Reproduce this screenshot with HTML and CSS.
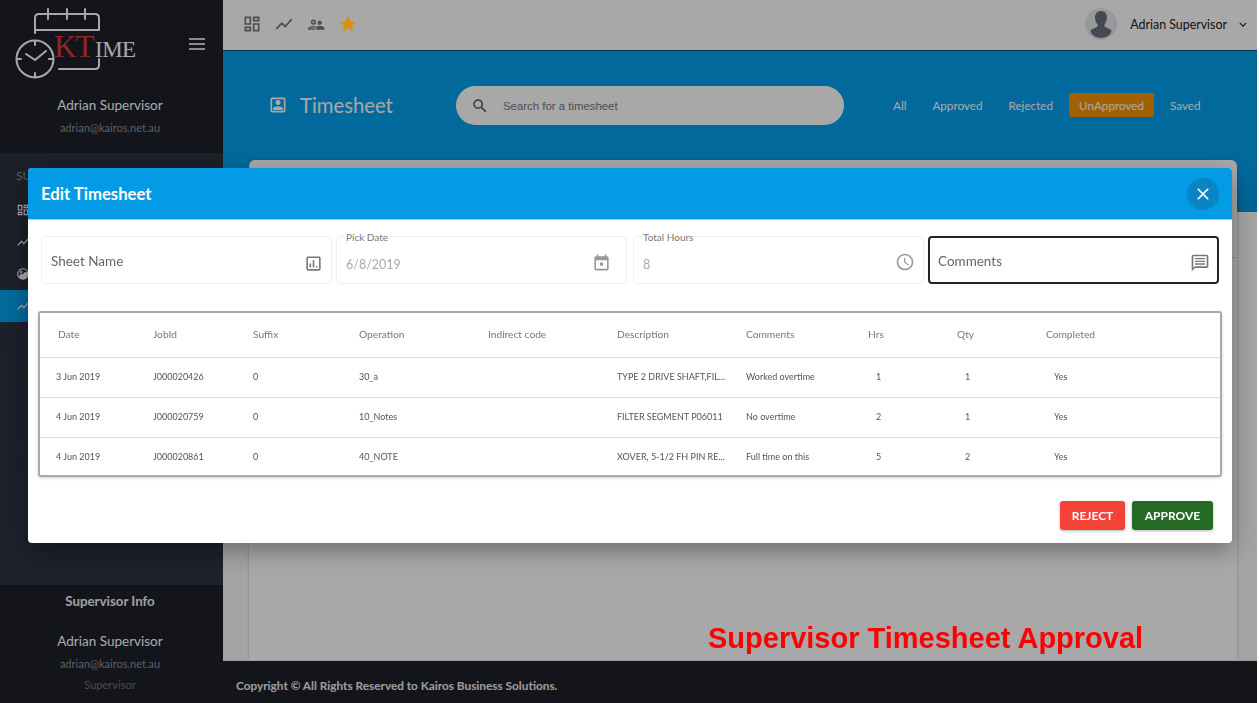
FILE: index.html
```html
<!DOCTYPE html>
<html lang="en">
<head>
<meta charset="utf-8">
<title>Timesheet</title>
<link rel="stylesheet" href="styles.css">
</head>
<body>
<div class="app">
  <aside class="sidebar">
    <div class="side-top">
      <div class="brand">
        <svg class="logo" viewBox="0 0 140 80" width="140" height="80">
          <g fill="none" stroke="#fff" stroke-width="2" stroke-linecap="round" stroke-linejoin="round">
            <path d="M35 33V18q0-4 4-4h56q4 0 4 4v12M35 30h64"/>
            <path d="M48 9v10M67 9v10M85 9v10"/>
            <path d="M59 69h36q4 0 4-4v-6"/>
            <circle cx="35" cy="59" r="18.5"/>
            <path d="M35 41v4M35 73v4M17 59h4M49 59h4M26 54l9 6 11-9"/>
          </g>
          <text class="logo-kt" x="54" y="57">KT</text>
          <text class="logo-ime" x="95" y="57">IME</text>
        </svg>
        <svg class="menu" viewBox="0 0 16 12" width="16" height="12"><path d="M0 0h16v2H0zM0 5h16v2H0zM0 10h16v2H0z" fill="#fff"/></svg>
      </div>
      <div class="who">Adrian Supervisor</div>
      <div class="mail">adrian@kairos.net.au</div>
    </div>
    <nav class="side-nav">
      <div class="nav-label">SUPERVISOR</div>
      <a class="nav-item"><svg viewBox="0 0 24 24" width="14" height="14"><path d="M19 5v2h-4V5h4M9 5v6H5V5h4m10 8v6h-4v-6h4M9 17v2H5v-2h4M21 3h-8v6h8V3zM11 3H3v10h8V3zm10 8h-8v10h8V11zm-10 4H3v6h8v-6z"/></svg>Dashboard</a>
      <a class="nav-item"><svg viewBox="0 0 24 24" width="14" height="14"><path d="M3.5 18.49l6-6.01 4 4L22 6.92l-1.41-1.41-7.09 7.97-4-4L2 16.99z"/></svg>Reports</a>
      <a class="nav-item"><svg viewBox="0 0 24 24" width="14" height="14"><path d="M12 2a10 10 0 1 0 0 20 10 10 0 0 0 0-20zm0 2a8 8 0 0 1 7.4 5H15a2 2 0 0 0-2 2v1H9a3 3 0 0 0-3 3v2.3A8 8 0 0 1 12 4zM9 6.5a2 2 0 1 0 0 4 2 2 0 0 0 0-4zm6 8a2 2 0 1 0 0 4 2 2 0 0 0 0-4z"/></svg>Employees</a>
      <a class="nav-item active"><svg viewBox="0 0 24 24" width="14" height="14"><path d="M3.5 18.49l6-6.01 4 4L22 6.92l-1.41-1.41-7.09 7.97-4-4L2 16.99z"/></svg>Timesheet</a>
    </nav>
    <div class="side-bottom">
      <div class="info-title">Supervisor Info</div>
      <div class="who">Adrian Supervisor</div>
      <div class="mail">adrian@kairos.net.au</div>
      <div class="role">Supervisor</div>
    </div>
  </aside>

  <main class="main">
    <header class="topbar">
      <div class="top-icons">
        <svg viewBox="0 0 24 24" width="20" height="20"><path d="M19 5v2h-4V5h4M9 5v6H5V5h4m10 8v6h-4v-6h4M9 17v2H5v-2h4M21 3h-8v6h8V3zM11 3H3v10h8V3zm10 8h-8v10h8V11zm-10 4H3v6h8v-6z"/></svg>
        <svg viewBox="0 0 24 24" width="20" height="20"><path d="M3.5 18.49l6-6.01 4 4L22 6.92l-1.41-1.41-7.09 7.97-4-4L2 16.99z"/></svg>
        <svg viewBox="0 0 24 24" width="20" height="20"><path d="M9 6.5a3.2 3.2 0 1 0 0 6.4 3.2 3.2 0 0 0 0-6.4zm0 1.9a1.3 1.3 0 1 1 0 2.6 1.3 1.3 0 0 1 0-2.6zM9 14.4c-3 0-6.500 1.300-6.500 3.300v1.300h8.600v-1.700H4.700c.6-.5 2.600-1.100 4.300-1.100 .9 0 1.800.1 2.500.3l1-1.500c-1.200-.4-2.500-.6-3.500-.6zM16.500 8a2.600 2.600 0 1 0 0 5.200 2.600 2.600 0 0 0 0-5.200zM16.500 14.500c-1 0-2 .2-2.900.5-.9.400-1.400 1-1.400 2v2h9.800v-2c0-2-3.700-2.500-5.500-2.500z"/></svg>
        <svg class="star" viewBox="0 0 24 24" width="20" height="20"><path d="M12 17.270L18.180 21l-1.640-7.030L22 9.240l-7.190-.61L12 2 9.190 8.630 2 9.240l5.460 4.730L5.820 21z"/></svg>
      </div>
      <div class="user">
        <svg class="avatar" viewBox="0 0 32 32" width="32" height="32"><circle cx="16" cy="16" r="16" fill="#e6e8ec"/><path d="M16 3c-3.800 0-6 2.800-6 6.500 0 2.800 1 5.200 2.600 6.800v2c-.8 1.200-6.100 2.500-7.100 4.500C6 26.500 10 30 16 30s10-3.500 10.500-7.200c-1-2-6.300-3.300-7.100-4.500v-2C21 14.700 22 12.300 22 9.500 22 5.800 19.800 3 16 3z" fill="#6a717d"/></svg>
        <span class="user-name">Adrian Supervisor</span>
        <svg class="chev" viewBox="0 0 10 6" width="8" height="5"><path d="M1 1l4 4 4-4" fill="none" stroke="#222" stroke-width="1.400"/></svg>
      </div>
    </header>
    <section class="hero">
      <div class="hero-title">
        <svg viewBox="0 0 24 24" width="20" height="20"><path d="M19 3H5c-1.100 0-2 .9-2 2v14c0 1.100.9 2 2 2h14c1.100 0 2-.9 2-2V5c0-1.100-.9-2-2-2zm0 16H5V5h14v14zM12 12a3 3 0 1 0 0-6 3 3 0 0 0 0 6zm-6 6h12v-1.500c0-2-4-3.100-6-3.100s-6 1.100-6 3.100z"/></svg>
        <h1>Timesheet</h1>
      </div>
      <div class="search">
        <svg viewBox="0 0 24 24" width="18" height="18"><path d="M15.500 14h-.79l-.28-.27A6.470 6.470 0 0 0 16 9.500 6.500 6.500 0 1 0 9.500 16c1.610 0 3.090-.59 4.230-1.570l.27.28v.79l5 4.990L20.490 19l-4.990-5zm-6 0C7.010 14 5 11.990 5 9.500S7.010 5 9.500 5 14 7.010 14 9.500 11.990 14 9.500 14z"/></svg>
        <span>Search for a timesheet</span>
      </div>
      <div class="filters">
        <a>All</a><a>Approved</a><a>Rejected</a><a class="on">UnApproved</a><a>Saved</a>
      </div>
    </section>
    <section class="content">
      <div class="card"><div class="card-head"></div></div>
    </section>
    <footer class="footer">Copyright © All Rights Reserved to Kairos Business Solutions.</footer>
  </main>
</div>

<div class="overlay">
  <div class="modal">
    <div class="modal-head">
      <h2>Edit Timesheet</h2>
      <button class="close"><svg viewBox="0 0 24 24" width="20" height="20"><path d="M19 6.410L17.590 5 12 10.590 6.410 5 5 6.410 10.590 12 5 17.590 6.410 19 12 13.410 17.590 19 19 17.590 13.410 12z"/></svg></button>
    </div>
    <div class="fields">
      <div class="field"><span class="ph">Sheet Name</span>
        <svg viewBox="0 0 24 24" width="19" height="19"><path d="M9 17H7v-5h2v5zm4 0h-2V8h2v9zm4 0h-2v-2h2v2zm2 2H5V5h14v14zm0-16H5c-1.100 0-2 .9-2 2v14c0 1.100.9 2 2 2h14c1.100 0 2-.9 2-2V5c0-1.100-.9-2-2-2z"/></svg></div>
      <div class="field filled date"><span class="legend">Pick Date</span><span class="val">6/8/2019</span>
        <svg viewBox="0 0 24 24" width="19" height="19"><path d="M19 4h-1V2h-2v2H8V2H6v2H5c-1.110 0-1.990.9-1.990 2L3 20c0 1.100.89 2 2 2h14c1.100 0 2-.9 2-2V6c0-1.100-.9-2-2-2zm0 16H5V9h14v11zM10 12h4v4h-4z"/></svg></div>
      <div class="field filled hours"><span class="legend">Total Hours</span><span class="val">8</span>
        <svg viewBox="0 0 24 24" width="20" height="20"><path d="M11.990 2C6.470 2 2 6.480 2 12s4.470 10 9.990 10C17.520 22 22 17.520 22 12S17.520 2 11.990 2zM12 20c-4.420 0-8-3.580-8-8s3.580-8 8-8 8 3.580 8 8-3.580 8-8 8zm.5-13H11v6l5.250 3.150.75-1.230-4.500-2.670z"/></svg></div>
      <div class="field focus"><span class="ph">Comments</span>
        <svg viewBox="0 0 24 24" width="20" height="20"><path d="M20 2H4c-1.100 0-2 .9-2 2v18l4-4h14c1.100 0 2-.9 2-2V4c0-1.100-.9-2-2-2zm0 14H6l-2 2V4h16v12zM6 6h12v1.600H6zM6 9.200h12v1.600H6zM6 12.400h12V14H6z"/></svg></div>
    </div>
    <div class="table-box">
      <table class="grid">
        <thead>
          <tr><th class="c1">Date</th><th class="c2">JobId</th><th class="c3">Suffix</th><th class="c4">Operation</th><th class="c5">Indirect code</th><th class="c6">Description</th><th class="c7">Comments</th><th class="c8">Hrs</th><th class="c9">Qty</th><th>Completed</th></tr>
        </thead>
        <tbody>
          <tr><td class="d">3 Jun 2019</td><td>J000020426</td><td>0</td><td>30_a</td><td></td><td>TYPE 2 DRIVE SHAFT,FIL...</td><td>Worked overtime</td><td class="n">1</td><td class="n">1</td><td class="y">Yes</td></tr>
          <tr><td class="d">4 Jun 2019</td><td>J000020759</td><td>0</td><td>10_Notes</td><td></td><td>FILTER SEGMENT P06011</td><td>No overtime</td><td class="n">2</td><td class="n">1</td><td class="y">Yes</td></tr>
          <tr><td class="d">4 Jun 2019</td><td>J000020861</td><td>0</td><td>40_NOTE</td><td></td><td>XOVER, 5-1/2 FH PIN RE...</td><td>Full time on this</td><td class="n">5</td><td class="n">2</td><td class="y">Yes</td></tr>
        </tbody>
      </table>
    </div>
    <div class="actions">
      <button class="btn reject">REJECT</button>
      <button class="btn approve">APPROVE</button>
    </div>
  </div>
</div>
<div class="caption">Supervisor Timesheet Approval</div>
</body>
</html>
```

FILE: styles.css
```css
* { box-sizing: border-box; }
html, body { margin: 0; height: 100%; overflow: hidden; }
body { font-family: "Lato", "Noto Sans", sans-serif; color: #222; background: #fff; }
h1, h2 { margin: 0; font-weight: 400; }

.app { display: grid; grid-template-columns: 223px 1fr; width: 1257px; height: 703px; }

/* sidebar */
.sidebar { display: flex; flex-direction: column; background: #1e212a; color: #fff; text-align: center; }
.side-top { height: 153px; }
.side-top .who, .side-top .mail, .side-bottom { padding-right: 3px; }
.brand { display: flex; align-items: flex-start; height: 90px; }
.logo { display: block; flex: none; }
.logo-kt { font: 400 31px "Liberation Serif", serif; fill: #d63a3a; letter-spacing: -1px; }
.logo-ime { font: 400 23px "Liberation Serif", serif; fill: #fff; letter-spacing: -.5px; }
.menu { margin: 38px 0 0 49px; opacity: .8; }
.who { font-size: 13.500px; line-height: 20px; margin-top: 5px; }
.mail { font-size: 11px; line-height: 16px; margin-top: 5px; color: #8d909a; }
.side-nav { flex: 1; background: linear-gradient(#2b303f, #2d3343); text-align: left; padding-top: 15px; }
.nav-label { font-size: 12px; color: #8d909a; padding-left: 16px; height: 26px; line-height: 16px; }
.nav-item { display: flex; align-items: center; gap: 10px; height: 32px; padding-left: 16px; font-size: 13px; color: #fff; }
.nav-item svg { fill: #fff; flex: none; }
.nav-item.active { background: #03a0ec; }
.side-bottom { height: 118px; padding-top: 6px; }
.info-title { font-size: 13.300px; font-weight: 700; line-height: 20px; color: #f2f2f2; margin-bottom: 20px; }
.side-bottom .who { margin-top: 0; }
.role { font-size: 11px; line-height: 16px; margin-top: 5px; color: #70737c; }

/* main */
.main { display: flex; flex-direction: column; min-width: 0; background: #f8f8f8; }
.topbar { height: 51px; flex: none; display: flex; align-items: center; justify-content: space-between; padding: 0 10px 2px 19px; background: #fff; border-bottom: 1px solid #02567f; }
.top-icons { display: flex; gap: 12px; align-items: center; }
.top-icons svg { fill: #777; }
.top-icons .star { fill: #d6920f; position: relative; z-index: 11; }
.user { display: flex; align-items: center; }
.avatar { margin-right: 13px; }
.user-name { font-size: 12.400px; color: #222; }
.chev { margin-left: 12px; }

.hero { height: 161px; flex: none; display: flex; align-items: flex-start; padding: 35px 0 0 45px; background: linear-gradient(#03a0ec 70%, #0395dc); color: #fff; }
.hero-title { display: flex; align-items: center; gap: 12px; width: 188px; height: 38px; }
.hero-title svg { fill: #fff; flex: none; }
.hero-title h1 { font-size: 20.300px; }
.search { display: flex; align-items: center; gap: 14px; width: 388px; height: 39px; padding-left: 15px; border-radius: 20px; background: #fff; color: #777; font: 11.400px "Liberation Sans", sans-serif; }
.search svg { fill: #555; }
.filters { display: flex; align-items: center; height: 37px; margin-left: 39px; font-size: 11.700px; gap: 6px; }
.filters a { padding: 5px 10px; color: #fff; }
.filters .on { background: #f59300; border-radius: 2px; }

.content { flex: 1; padding: 0 20px 0 26px; margin-top: -52px; min-height: 0; }
.card { height: 100%; background: #fff; border-radius: 6px 6px 0 0; box-shadow: 0 0 3px rgba(0,0,0,.2); }
.card-head { height: 98px; border-bottom: 1px solid #ddd; }
.footer { height: 43px; flex: none; display: flex; align-items: center; padding: 7px 0 0 13px; background: #1e212a; color: #eee; font-size: 11.800px; font-weight: 700; border-top: 1px solid #eee; }

/* overlay + modal */
.overlay { position: fixed; inset: 0 2px 0 0; z-index: 10; background: rgba(0,0,0,.34); padding: 168px 25px 0 28px; }
.modal { height: 375px; background: #fff; border-radius: 4px; overflow: hidden; box-shadow: 0 8px 24px rgba(0,0,0,.35); }
.modal-head { height: 52px; display: flex; align-items: center; justify-content: space-between; padding: 0 13px; background: #039be5; border-bottom: 1px solid #7fdcff; color: #fff; }
.modal-head h2 { font-size: 16.700px; font-weight: 700; }
.close { width: 32px; height: 32px; padding: 6px; border: 0; border-radius: 50%; background: #0a84c2; display: flex; }
.close svg { fill: #fff; }

.fields { display: grid; grid-template-columns: 295px 297px 295px 291px; padding: 16px 0 0 13px; }
.field { position: relative; width: 291px; height: 48px; display: flex; align-items: center; justify-content: space-between; padding: 0 8px 0 9px; border: 1px solid #f0f0f0; border-radius: 4px; }
.field.filled { padding-top: 5px; }
.field svg { fill: #777; flex: none; margin-top: 6px; }
.field.filled svg { fill: #999; margin-top: -1px; }
.field.date svg { margin-right: 7px; }
.field.hours svg { margin-right: 0; }
.field.focus { border: 2px solid #222; padding: 0 7px 0 8px; }
.ph { font-size: 13.500px; color: #666; margin-top: 1px; }
.val { font-size: 12.500px; color: #aaa; margin-top: 4px; }
.legend { position: absolute; left: 8px; top: -6px; padding: 0 1px; background: #fff; font-size: 10px; line-height: 13px; color: #777; }

.table-box { margin: 27px 10px 0 10px; height: 166px; border: 2px solid #aaa; border-radius: 3px; box-shadow: 0 1px 3px rgba(0,0,0,.2); }
.grid { width: 100%; border-collapse: collapse; table-layout: fixed; }
.grid th { height: 44px; padding: 0 0 1px 18px; text-align: left; font-size: 10.200px; font-weight: 400; color: #777; border-bottom: 1px solid #ddd; }
.grid td { height: 40px; padding: 0 0 1px 18px; font-size: 9px; color: #555; border-bottom: 1px solid #ddd; white-space: nowrap; }
.grid tr:last-child td { border-bottom: 0; }
.grid td.d { padding-left: 16px; }
.grid td.n { padding-left: 26px; }
.grid td.y { padding-left: 26px; }
.c1 { width: 95px; }
.c2 { width: 100px; }
.c3 { width: 106px; }
.c4, .c5, .c6 { width: 129px; }
.c7 { width: 122px; }
.c8, .c9 { width: 89px; }

.actions { display: flex; justify-content: flex-end; gap: 7px; padding: 24px 19px 0 0; }
.btn { height: 29px; border: 0; border-radius: 3px; color: #fff; font: 700 12px "Lato", sans-serif; box-shadow: 0 1px 3px rgba(0,0,0,.3); }
.reject { width: 65px; background: #f44336; }
.approve { width: 81px; background: #256b26; }

.caption { position: fixed; z-index: 12; left: 708px; top: 621px; font: 700 29px/34px "Liberation Sans", sans-serif; color: #f00; white-space: nowrap; }
```
